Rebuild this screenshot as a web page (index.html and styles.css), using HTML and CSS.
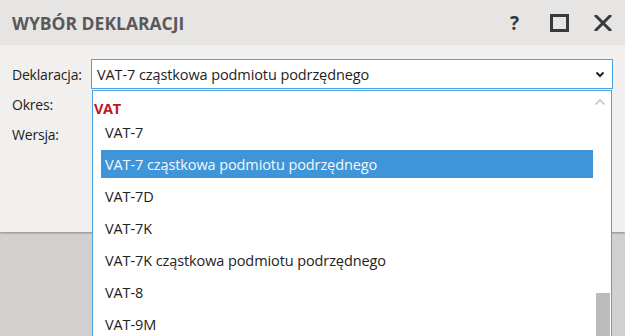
FILE: index.html
```html
<!DOCTYPE html>
<html lang="pl">
<head>
  <meta charset="UTF-8">
  <title>Wybór deklaracji</title>
  <link rel="stylesheet" href="styles.css">
</head>
<body>
  <div class="dialog">
    <div class="title-bar">
      <h1>WYBÓR DEKLARACJI</h1>
      <div class="title-buttons">
        <span class="btn-help">?</span>
        <svg class="btn-max" width="19" height="18" viewBox="0 0 19 18">
          <rect x="1.5" y="1.5" width="16" height="15" fill="none" stroke="#3a3a3a" stroke-width="3"/>
        </svg>
        <svg class="btn-close" width="18" height="16" viewBox="0 0 18 16">
          <path d="M2 1 L16 15 M16 1 L2 15" stroke="#3a3a3a" stroke-width="3" stroke-linecap="square"/>
        </svg>
      </div>
    </div>

    <div class="content">
      <div class="form-row">
        <label>Deklaracja:</label>
        <div class="select">
          <span>VAT-7 cząstkowa podmiotu podrzędnego</span>
          <svg width="10" height="7" viewBox="0 0 10 7">
            <path d="M1.5 1.5 L5 5 L8.5 1.5" fill="none" stroke="#222" stroke-width="2"/>
          </svg>
        </div>
      </div>
      <div class="form-row">
        <label>Okres:</label>
      </div>
      <div class="form-row">
        <label>Wersja:</label>
      </div>
    </div>
  </div>

  <div class="dropdown">
    <div class="list">
      <div class="group">VAT</div>
      <div class="item">VAT-7</div>
      <div class="item selected">VAT-7 cząstkowa podmiotu podrzędnego</div>
      <div class="item">VAT-7D</div>
      <div class="item">VAT-7K</div>
      <div class="item">VAT-7K cząstkowa podmiotu podrzędnego</div>
      <div class="item">VAT-8</div>
      <div class="item">VAT-9M</div>
    </div>
    <div class="scrollbar">
      <svg class="arrow-up" width="12" height="8" viewBox="0 0 12 8">
        <path d="M1.5 6.5 L6 2 L10.5 6.5" fill="none" stroke="#c4c4c4" stroke-width="1.6"/>
      </svg>
      <div class="thumb"></div>
    </div>
  </div>
</body>
</html>
```

FILE: styles.css
```css
* {
  margin: 0;
  padding: 0;
  box-sizing: border-box;
  font-family: 'Open Sans', 'Noto Sans', sans-serif;
}
body {
  width: 625px;
  height: 336px;
  overflow: hidden;
  background: #d2d0ce;
  position: relative;
}
.dialog {
  background: #f1f0ef;
  box-shadow: 0 1px 2px rgba(0, 0, 0, 0.35);
}
.title-bar {
  height: 45px;
  background: #e7e5e3;
  display: flex;
  align-items: center;
  justify-content: space-between;
  padding: 0 13px 0 12px;
}
.title-bar h1 {
  font-size: 17.5px;
  font-weight: 700;
  color: #595959;
}
.title-buttons {
  display: flex;
  align-items: center;
}
.btn-help {
  font-size: 19px;
  font-weight: 700;
  color: #3a3a3a;
  width: 40px;
  text-align: left;
}
.btn-max {
  margin-right: 25px;
}
.content {
  height: 187px;
  padding: 14px 12px 0 12px;
}
.form-row {
  display: flex;
  align-items: center;
  height: 30px;
}
.form-row label {
  width: 79px;
  font-size: 14px;
  color: #222;
  letter-spacing: -0.2px;
}
.select {
  flex: 1;
  height: 30px;
  background: #fff;
  border: 1px solid #4ea2e0;
  display: flex;
  align-items: center;
  justify-content: space-between;
  padding: 0 7px 0 5px;
  font-size: 14.5px;
  color: #1e1e1e;
  letter-spacing: -0.1px;
}
.dropdown {
  position: absolute;
  left: 92px;
  top: 90px;
  width: 520px;
  height: 246px;
  overflow: hidden;
  background: #fff;
  border-left: 1px solid #4ea2e0;
  border-right: 1px solid #4ea2e0;
  border-top: 1px solid #4ea2e0;
  display: flex;
}
.list {
  flex: 1;
  padding-left: 8px;
}
.group {
  height: 25px;
  padding-top: 9px;
  line-height: 18px;
  margin-left: -7px;
  font-size: 14.5px;
  font-weight: 700;
  color: #c0161f;
  letter-spacing: -0.3px;
}
.item {
  height: 32px;
  display: flex;
  align-items: center;
  padding-left: 4px;
  font-size: 14.5px;
  color: #222;
  letter-spacing: -0.1px;
}
.item.selected {
  background: #3f95d9;
  border-top: 2px solid #fff;
  border-bottom: 2px solid #fff;
  color: #f4f8fc;
}
.scrollbar {
  width: 16px;
  position: relative;
  margin-left: 2px;
}
.arrow-up {
  position: absolute;
  top: 7px;
  left: -1px;
}
.thumb {
  position: absolute;
  top: 202px;
  left: 1px;
  width: 14px;
  height: 44px;
  background: #bbbbbb;
}
```
